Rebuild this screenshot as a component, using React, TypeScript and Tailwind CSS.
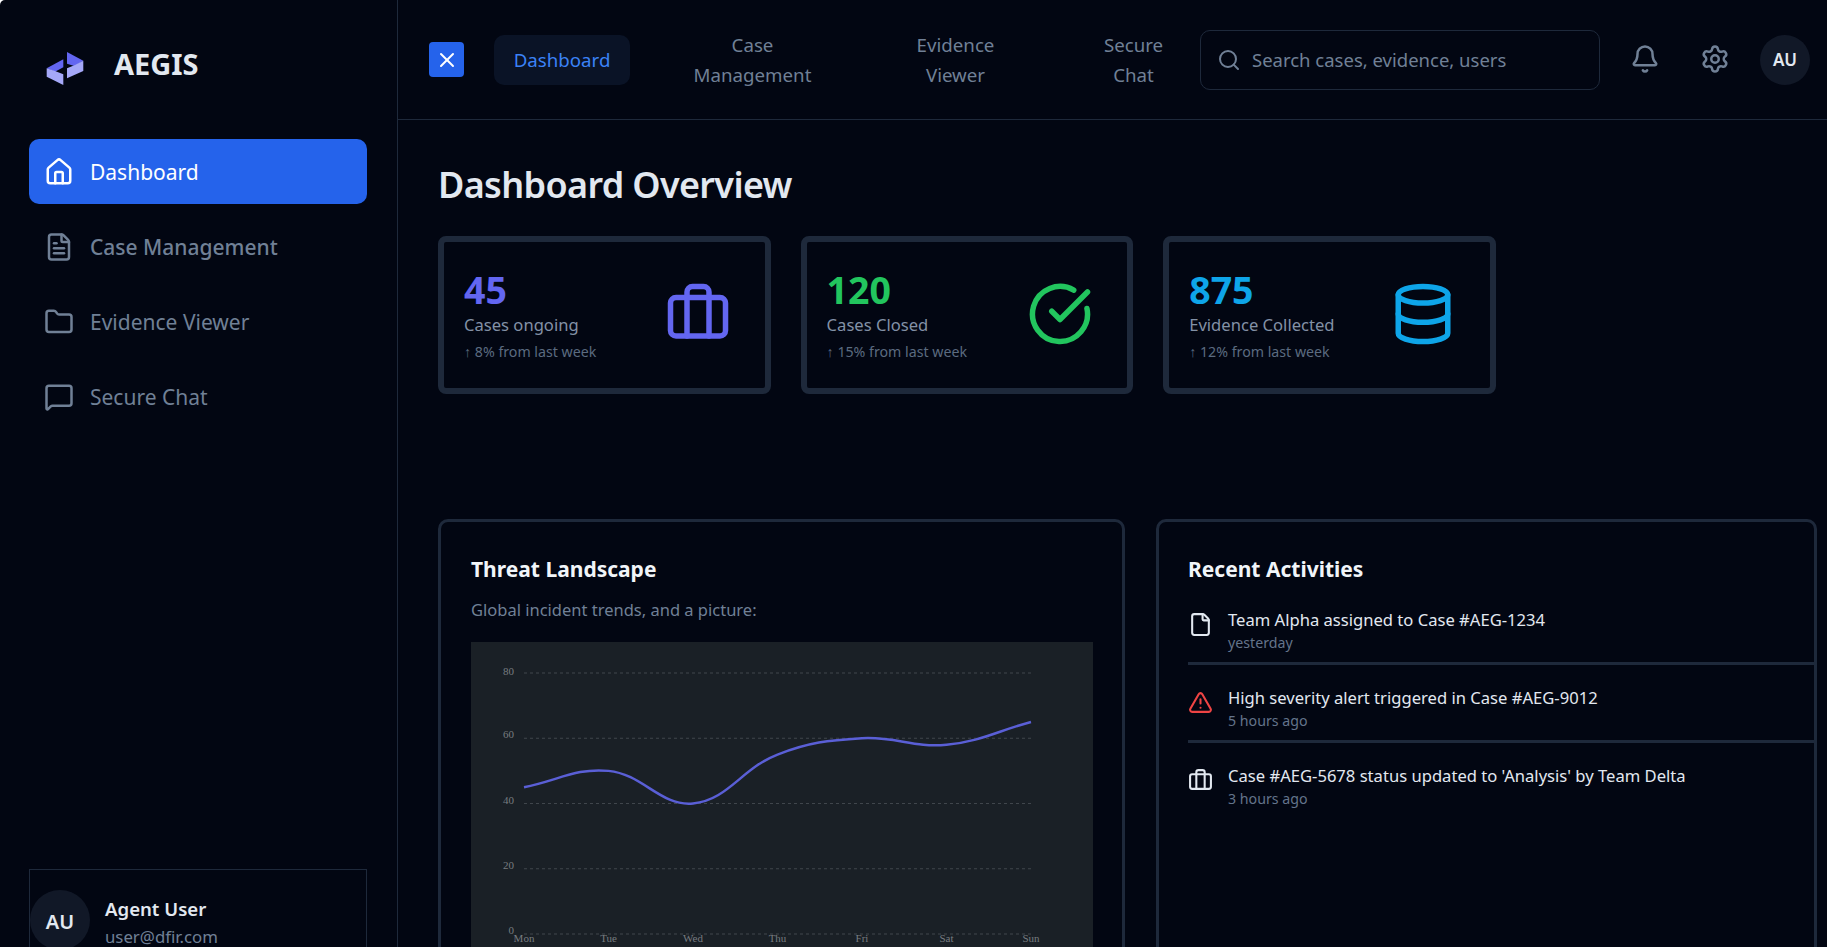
import React from "react";
import {
  AlertTriangle,
  Bell,
  Briefcase,
  CircleCheckBig,
  Database,
  File,
  FileText,
  Folder,
  House,
  MessageSquare,
  Search,
  Settings,
  X,
} from "lucide-react";

const font = { fontFamily: '"Noto Sans", sans-serif' };

const sideItems = [
  { label: "Dashboard", icon: House, cls: "bg-[#2563eb] text-white" },
  { label: "Case Management", icon: FileText, cls: "font-medium text-[#708096]" },
  { label: "Evidence Viewer", icon: Folder, cls: "text-[#708096]" },
  { label: "Secure Chat", icon: MessageSquare, cls: "text-[#708096]" },
];

const stats = [
  { value: "45", label: "Cases ongoing", delta: "↑ 8% from last week", icon: Briefcase, color: "text-[#6366f1]" },
  { value: "120", label: "Cases Closed", delta: "↑ 15% from last week", icon: CircleCheckBig, color: "text-[#22c55e]" },
  { value: "875", label: "Evidence Collected", delta: "↑ 12% from last week", icon: Database, color: "text-[#0ea5e9]" },
];

const activities = [
  { text: "Team Alpha assigned to Case #AEG-1234", time: "yesterday", icon: File, color: "text-[#e2e8f0]" },
  { text: "High severity alert triggered in Case #AEG-9012", time: "5 hours ago", icon: AlertTriangle, color: "text-[#ef4444]" },
  { text: "Case #AEG-5678 status updated to 'Analysis' by Team Delta", time: "3 hours ago", icon: Briefcase, color: "text-[#e2e8f0]" },
];

const days = ["Mon", "Tue", "Wed", "Thu", "Fri", "Sat", "Sun"];
const series = [45, 50, 40, 55, 60, 58, 65];
const ticks = [80, 60, 40, 20, 0];

const xAt = (i: number) => 53 + i * 84.5;
const yAt = (v: number) => 292 - v * 3.2625;

// same spline a line chart lib draws with tension 0.4
function linePath() {
  const pts = series.map((v, i) => [xAt(i), yAt(v)]);
  const ctrl = pts.map((p, i) => {
    const prev = pts[i - 1] || p;
    const next = pts[i + 1] || p;
    const d01 = Math.hypot(p[0] - prev[0], p[1] - prev[1]);
    const d12 = Math.hypot(next[0] - p[0], next[1] - p[1]);
    const s = d01 + d12 || 1;
    const fa = (0.4 * d01) / s;
    const fb = (0.4 * d12) / s;
    return {
      inX: p[0] - fa * (next[0] - prev[0]),
      inY: p[1] - fa * (next[1] - prev[1]),
      outX: p[0] + fb * (next[0] - prev[0]),
      outY: p[1] + fb * (next[1] - prev[1]),
    };
  });
  let d = `M${pts[0][0]} ${pts[0][1]}`;
  for (let i = 1; i < pts.length; i++) {
    d += ` C${ctrl[i - 1].outX} ${ctrl[i - 1].outY} ${ctrl[i].inX} ${ctrl[i].inY} ${pts[i][0]} ${pts[i][1]}`;
  }
  return d;
}

function ThreatChart() {
  return (
    <svg width="622" height="340" className="block bg-[#1a2026]">
      {ticks.map((t) => (
        <g key={t}>
          <line x1="53" x2="560" y1={yAt(t)} y2={yAt(t)} stroke="#40464c" strokeWidth="1" strokeDasharray="3 3" />
          <text x="43" y={yAt(t) + (t === 80 ? 2 : 0)} textAnchor="end" fontSize="11" fill="#777c80" fontFamily='"Liberation Serif", serif'>
            {t}
          </text>
        </g>
      ))}
      {days.map((d, i) => (
        <text key={d} x={xAt(i)} y="300" textAnchor="middle" fontSize="11" fill="#777c80" fontFamily='"Liberation Serif", serif'>
          {d}
        </text>
      ))}
      <path d={linePath()} fill="none" stroke="#5a5fd6" strokeWidth="2.5" />
    </svg>
  );
}

function Logo() {
  return (
    <svg width="38" height="34" viewBox="0 0 38 34">
      <path d="M21 0 L37.3 8.7 L29 14.3 L21 11.7 Z" fill="#6366f1" />
      <path d="M37.3 8.7 L37.3 19 L21 26.3 L21 16.3 L29 13 Z" fill="#a5a8f8" />
      <path d="M17.3 7.3 L17.3 15.3 L9 19.7 L0.7 16.3 Z" fill="#6366f1" />
      <path d="M0.7 16.3 L0.7 24.7 L17.3 33 L17.3 22.3 L9 19 Z" fill="#a5a8f8" />
    </svg>
  );
}

export default function App() {
  return (
    <div className="flex h-screen overflow-hidden rounded-tl-[5px] bg-[#020612] text-white" style={font}>
      <aside className="flex w-[398px] shrink-0 flex-col border-r border-[#1e293b] pl-[29px] pr-[30px]">
        <div className="flex h-[139px] items-start pl-[17px] pt-[52px]">
          <Logo />
          <span className="ml-[30px] text-[29px] font-bold leading-[24px] text-[#e2e8f0]">AEGIS</span>
        </div>
        <nav className="flex flex-col gap-[10px]">
          {sideItems.map((item) => {
            const Icon = item.icon;
            return (
              <div key={item.label} className={`flex h-[65px] items-center gap-[16px] rounded-[10px] pl-[15px] text-[21px] ${item.cls}`}>
                <Icon size={30} strokeWidth={2} />
                <span className="pt-[2px]">{item.label}</span>
              </div>
            );
          })}
        </nav>
        <div className="mt-auto flex h-[78px] items-start border border-b-0 border-[#1e293b] pt-[20px]">
          <div className="flex h-[60px] w-[60px] shrink-0 items-center justify-center rounded-full bg-[#111827] pt-[3px] text-[20px] font-semibold text-[#e2e8f0]">
            AU
          </div>
          <div className="ml-[15px] mt-[5px]">
            <div className="text-[18.6px] font-semibold leading-[28px] text-[#e2e8f0]">Agent User</div>
            <div className="text-[16.8px] leading-[28px] text-[#708096]">user@dfir.com</div>
          </div>
        </div>
      </aside>

      <main className="flex min-w-0 flex-1 flex-col">
        <header className="flex h-[120px] shrink-0 items-center border-b border-[#1e293b] pl-[31px] text-[18.7px] leading-[30px]">
          <button className="flex h-[35px] w-[35px] items-center justify-center rounded-[4px] bg-[#2563eb] text-white">
            <X size={24} />
          </button>
          <div className="ml-[30px] flex h-[50px] w-[136px] items-center justify-center rounded-[10px] bg-[#0a1326] text-[#3b82f6]">
            Dashboard
          </div>
          <div className="ml-[44px] w-[157px] text-center text-[#708096]">Case Management</div>
          <div className="ml-[66px] w-[117px] text-center text-[#708096]">Evidence Viewer</div>
          <div className="ml-[70px] w-[99px] text-center text-[#708096]">Secure Chat</div>
          <div className="ml-[17px] flex h-[60px] w-[400px] items-center gap-[11px] rounded-[10px] border border-[#1e293b] pl-[16px] text-[18.5px] text-[#708096]">
            <Search size={24} />
            <span className="pt-[1px]">Search cases, evidence, users</span>
          </div>
          <Bell size={30} className="ml-[30px] -mt-[2px] text-[#708096]" />
          <Settings size={30} className="ml-[40px] -mt-[2px] text-[#708096]" />
          <div className="ml-[30px] flex h-[50px] w-[50px] items-center justify-center rounded-full bg-[#111827] pt-[1px] text-[17px] font-semibold text-[#e2e8f0]">
            AU
          </div>
        </header>

        <div className="flex-1 overflow-hidden px-[40px]">
          <h1 className="mt-[40px] text-[36px] font-semibold leading-[50px] tracking-[-0.65px] text-[#e2e8f0]">Dashboard Overview</h1>
          <div className="mt-[26px] flex gap-[30px]">
            {stats.map((s) => {
              const Icon = s.icon;
              return (
                <div
                  key={s.label}
                  className="flex h-[158px] w-[332.6px] items-center justify-between rounded-[8px] border-[6px] border-[#1e293b] pl-[20px] pr-[34px]"
                >
                  <div>
                    <div className={`text-[37.5px] font-bold leading-[41px] ${s.color}`}>{s.value}</div>
                    <div className="mt-[2px] text-[16.6px] leading-[26px] text-[#8391a6]">{s.label}</div>
                    <div className="mt-[4px] text-[14.2px] leading-[20px] text-[#5b6b80]">{s.delta}</div>
                  </div>
                  <Icon size={66} className={`-mt-[2px] ${s.color}`} />
                </div>
              );
            })}
          </div>

          <div className="mt-[125px] flex gap-[31px]">
            <section className="h-[600px] w-[687px] shrink-0 rounded-[10px] border-[3px] border-[#1e293b] px-[30px] pt-[30px]">
              <h2 className="text-[21px] font-bold leading-[34px] text-[#f1f5f9]">Threat Landscape</h2>
              <p className="mt-[10px] text-[16.5px] leading-[28px] text-[#708096]">Global incident trends, and a picture:</p>
              <div className="mt-[18px]">
                <ThreatChart />
              </div>
            </section>
            <section className="h-[600px] w-[661px] shrink-0 rounded-[10px] border-[3px] border-[#1e293b] pl-[29px] pt-[30px]">
              <h2 className="text-[21px] font-bold leading-[34px] text-[#f1f5f9]">Recent Activities</h2>
              <div className="mt-[0.5px]">
                {activities.map((a, i) => {
                  const Icon = a.icon;
                  return (
                    <div key={a.text} className={`flex h-[78px] gap-[15px] pt-[20px] ${i < 2 ? "border-b-[3px] border-[#1e293b]" : ""}`}>
                      <Icon size={25} className={`mt-[5px] shrink-0 ${a.color}`} />
                      <div>
                        <div className="text-[16.6px] leading-[26px] text-[#e2e8f0]">{a.text}</div>
                        <div className="text-[14.2px] leading-[19px] text-[#64748b]">{a.time}</div>
                      </div>
                    </div>
                  );
                })}
              </div>
            </section>
          </div>
        </div>
      </main>
    </div>
  );
}
